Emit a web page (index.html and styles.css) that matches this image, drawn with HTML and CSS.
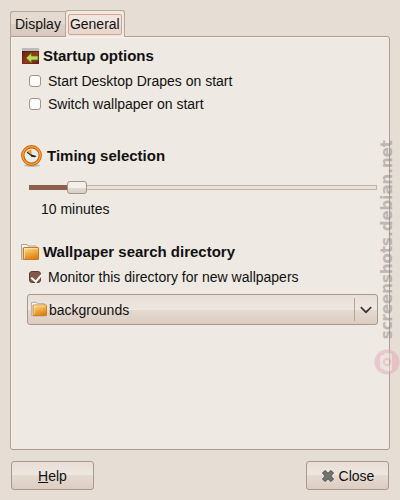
FILE: index.html
```
<!DOCTYPE html>
<html lang="en">
<head>
  <meta charset="UTF-8">
  <title>Desktop Drapes Preferences</title>
  <meta name="viewport" content="width=device-width, initial-scale=1.0">
  <link rel="stylesheet" href="styles.css">
</head>
<body>

  <!-- shared icon -->
  <svg class="defs" aria-hidden="true">
    <defs>
      <linearGradient id="folder-front" x1="0" y1="0" x2="0.4" y2="1">
        <stop offset="0" stop-color="#fbe3a0"/>
        <stop offset="0.5" stop-color="#f2b24a"/>
        <stop offset="1" stop-color="#e0811a"/>
      </linearGradient>
      <linearGradient id="startup-red" x1="0" y1="0" x2="1" y2="1">
        <stop offset="0" stop-color="#5c1a12"/>
        <stop offset="0.6" stop-color="#9a3a1c"/>
        <stop offset="1" stop-color="#5a2414"/>
      </linearGradient>
      <symbol id="folder" viewBox="0 0 18 18">
        <path d="M.5 16.500V1.500h5.500l1 1.500h8v13.500z" fill="#f6f4f0" stroke="#a9a49c"/>
        <path d="M1.500 16.500V4.500" stroke="#d5d0c8"/>
        <rect x="2.500" y="4.500" width="15" height="12" rx="0.500" fill="url(#folder-front)" stroke="#c97a22"/>
        <path d="M3.500 15.500v-10h13" fill="none" stroke="#fdeab8" stroke-opacity="0.700"/>
      </symbol>
    </defs>
  </svg>

  <div class="tabs" role="tablist">
    <button class="tab" role="tab" aria-selected="false">Display</button>
    <button class="tab active" role="tab" aria-selected="true"><span>General</span></button>
  </div>

  <main class="panel">
    <section class="section startup">
      <h2>
        <svg class="icon" width="18" height="18" viewBox="0 0 18 18">
          <rect x="1" y="1" width="17" height="16" fill="url(#startup-red)"/>
          <rect x="1" y="1" width="17" height="3" fill="#bcbcba"/>
          <path d="M1 4.500h17" stroke="#4a1b12" stroke-opacity="0.700"/>
          <path d="M1.500 4v12.500h16V4" fill="none" stroke="#4a1b12" stroke-opacity="0.400"/>
          <path d="M5 11l5.500-5v3H17v4h-6.500v3z" fill="#b9dc52" stroke="#55701a" stroke-width="0.700"/>
        </svg>
        Startup options
      </h2>
      <label class="check"><input type="checkbox"> Start Desktop Drapes on start</label>
      <label class="check"><input type="checkbox"> Switch wallpaper on start</label>
    </section>

    <section class="section">
      <h2>
        <svg class="icon" width="22" height="24" viewBox="0 0 22 24">
          <ellipse cx="11" cy="21.500" rx="8" ry="1.500" fill="#000" fill-opacity="0.220"/>
          <circle cx="10.500" cy="11.500" r="8.700" fill="#e9ece9" stroke="#cb6208" stroke-width="3.400"/>
          <circle cx="10.500" cy="11.500" r="8.800" fill="none" stroke="#f9a63c" stroke-width="1.300"/>
          <path d="M10.500 11.500L5.800 8A6 6 0 0 1 10.500 5.500z" fill="#f39a2a"/>
          <path d="M6 8.200l4.500 3.300" stroke="#333" stroke-width="1.200"/>
          <path d="M9.500 10.300l6 1.700-1.500 1.200-3.800-.400z" fill="#222"/>
        </svg>
        <label for="interval">Timing selection</label>
      </h2>
      <input class="slider" type="range" id="interval" min="0" max="88" value="10">
      <output class="interval-value" for="interval">10 minutes</output>
    </section>

    <section class="section">
      <h2>
        <svg class="icon" width="18" height="18"><use href="#folder"/></svg>
        Wallpaper search directory
      </h2>
      <label class="check"><input type="checkbox" checked> Monitor this directory for new wallpapers</label>
      <div class="chooser">
        <select aria-label="Wallpaper search directory">
          <option>backgrounds</option>
        </select>
        <svg class="chooser-icon" width="16" height="16"><use href="#folder"/></svg>
        <span class="chooser-arrow">
          <svg width="12" height="8" viewBox="0 0 12 8">
            <path d="M.8 1.200L6 6.200l5.200-5" fill="none" stroke="#3c3632" stroke-width="1.700"/>
          </svg>
        </span>
      </div>
    </section>
  </main>

  <footer class="actions">
    <button class="btn"><span><u>H</u>elp</span></button>
    <button class="btn">
      <svg width="14" height="14" viewBox="0 0 14 14">
        <path d="M4 1.500L7 4.300l3-2.800L12.500 4 9.700 7l2.800 3-2.500 2.500L7 9.700l-3 2.800L1.500 10l2.800-3-2.800-3z" fill="#73756f" stroke="#484a46" stroke-linejoin="round"/>
      </svg>
      Close
    </button>
  </footer>

  <div class="watermark">
    <svg width="26" height="26" viewBox="0 0 26 26">
      <circle cx="13" cy="13" r="12.500" fill="#e6a9b8"/>
      <path d="M8 6h2l1-2h6l1 2v14l-1 2h-6l-1-2H8l-2-2V8z" fill="#ece0dc"/>
      <circle cx="13" cy="13" r="3.200" fill="none" stroke="#e6a9b8" stroke-width="2"/>
    </svg>
    <span>screenshots.debian.net</span>
  </div>

</body>
</html>
```
FILE: styles.css
```
* {
  box-sizing: border-box;
}

body {
  display: flex;
  flex-direction: column;
  min-height: 100vh;
  margin: 0;
  padding: 10px;
  background-color: #e6ddd4;
  color: #111;
  font-family: "Liberation Sans", Arial, sans-serif;
  font-size: 14px;
  line-height: 18px;
}

button,
select {
  font: inherit;
  color: inherit;
}

.defs {
  position: absolute;
  width: 0;
  height: 0;
}

/* tabs */
.tabs {
  display: flex;
  align-items: flex-end;
}

.tab {
  height: 25px;
  padding: 0 4px;
  border: 1px solid #b8a594;
  border-right: none;
  border-bottom: none;
  border-radius: 3px 0 0 0;
  background: linear-gradient(#e5dad0 50%, #dccfc4 50%, #d8cac0);
}

.tab.active {
  height: 27px;
  margin-bottom: -1px;
  padding: 2px;
  border-right: 1px solid #b8a594;
  border-radius: 3px 3px 0 0;
  background: #eee9e3;
  z-index: 1;
}

.tab.active span {
  display: block;
  height: 21px;
  padding: 0 1px;
  border: 1px solid #d9a18c;
  border-radius: 2px;
  background: linear-gradient(#f0e6df 50%, #e8d8ce 50%);
}

/* panel */
.panel {
  flex: 1;
  padding: 9px 11px 9px 10px;
  border: 1px solid #b09c8c;
  border-radius: 0 3px 3px 3px;
  background-color: #eee9e3;
  box-shadow: inset 1px 1px #f6f2ee;
}

.section {
  margin-bottom: 24px;
}

.startup {
  margin-bottom: 31px;
}

h2 {
  display: flex;
  align-items: center;
  gap: 4px;
  height: 20px;
  margin: 0 0 3px;
  font-size: 15px;
}

.icon {
  flex: none;
}

.check {
  display: flex;
  align-items: center;
  gap: 7px;
  height: 23px;
  padding-left: 8px;
}

.check input {
  appearance: none;
  width: 12px;
  height: 12px;
  margin: 0;
  border: 1px solid #a8917f;
  border-radius: 3px;
  background: #fff;
}

.check input:checked {
  border-color: #5b3d33;
  background: #85594a;
}

.check input:checked::after {
  content: "";
  display: block;
  width: 5px;
  height: 8px;
  margin-left: 3px;
  border: solid #fff;
  border-width: 0 2px 2px 0;
  transform: rotate(40deg);
}

/* slider */
.slider {
  appearance: none;
  display: block;
  width: calc(100% - 9px);
  height: 14px;
  margin: 14px 0 6px 8px;
  background: none;
}

.slider::-webkit-slider-runnable-track {
  height: 5px;
  padding: 1px;
  background:
    linear-gradient(90deg, #8d5f4c 13%, transparent 13%),
    linear-gradient(#e9e1d9, #e9e1d9) content-box,
    #c4b3a4;
}

.slider::-webkit-slider-thumb {
  appearance: none;
  width: 20px;
  height: 13px;
  margin-top: -5px;
  border: 1px solid #a39489;
  border-radius: 3px;
  background: linear-gradient(#f3efeb 50%, #e4dcd5 50%, #d8cec6);
}

.interval-value {
  display: block;
  padding-left: 20px;
}

/* directory chooser */
.chooser {
  position: relative;
  margin: 6px 0 0 6px;
}

.chooser select {
  appearance: none;
  display: block;
  width: 100%;
  height: 31px;
  padding: 0 30px 0 21px;
  border: 1px solid #a8998d;
  border-radius: 3px;
  background: linear-gradient(#e8ded6, #eee7e1 50%, #e5dad1 50%, #dccdc2);
}

.chooser-icon {
  position: absolute;
  left: 4px;
  top: 7px;
  pointer-events: none;
}

.chooser-arrow {
  position: absolute;
  right: 0;
  top: 4px;
  display: flex;
  align-items: center;
  height: 23px;
  padding: 0 6px 0 5px;
  border-left: 1px solid #b8a594;
  pointer-events: none;
}

/* bottom buttons */
.actions {
  display: flex;
  justify-content: space-between;
  padding: 11px 1px 0;
}

.btn {
  display: flex;
  align-items: center;
  justify-content: center;
  gap: 4px;
  width: 83px;
  height: 29px;
  padding: 0;
  border: 1px solid #a8998d;
  border-radius: 3px;
  background: linear-gradient(#e8ded6, #eee7e1 50%, #e5dad1 50%, #dccdc2);
}

/* overlay on the right edge */
.watermark {
  position: absolute;
  right: 0;
  top: 140px;
  display: flex;
  flex-direction: column-reverse;
  align-items: center;
  gap: 10px;
  opacity: 0.5;
  pointer-events: none;
}

.watermark span {
  writing-mode: vertical-rl;
  transform: rotate(180deg);
  color: #8c8682;
  font-family: "DejaVu Sans", sans-serif;
  font-size: 15px;
  font-weight: bold;
}
```
